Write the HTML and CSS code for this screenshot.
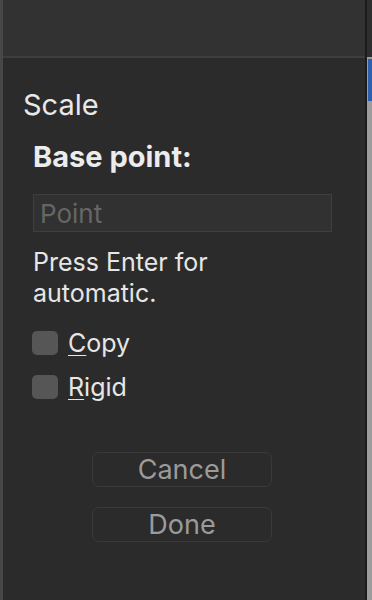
FILE: index.html
```html
<!DOCTYPE html>
<html>
<head>
<meta charset="utf-8">
<link rel="stylesheet" href="styles.css">
</head>
<body>
<div class="window">
  <div class="main">
    <div class="topbar"></div>
    <div class="panel">
      <div class="title">Scale</div>
      <div class="content">
        <div class="label">Base point:</div>
        <div class="input"><span class="placeholder">Point</span></div>
        <div class="hint">Press Enter for<br>automatic.</div>
        <div class="checks">
          <label class="check"><span class="box"></span><span class="ctext"><u>C</u>opy</span></label>
          <label class="check"><span class="box"></span><span class="ctext"><u>R</u>igid</span></label>
        </div>
      </div>
      <div class="buttons">
        <div class="btn">Cancel</div>
        <div class="btn">Done</div>
      </div>
    </div>
  </div>
  <div class="divider"></div>
  <div class="side">
    <div class="side-top"></div>
    <div class="side-body"><div class="side-blue"></div></div>
  </div>
</div>
</body>
</html>
```
FILE: styles.css
```css
html, body {
  margin: 0;
  padding: 0;
  background: #2b2b2b;
}
body {
  width: 372px;
  height: 600px;
  overflow: hidden;
  font-family: Inter, "Liberation Sans", sans-serif;
  color: #e6e6e6;
}
.window {
  display: flex;
  height: 600px;
}
.main {
  flex: 1;
  display: flex;
  flex-direction: column;
  border-left: 3px solid #474747;
}
.topbar {
  height: 56px;
  background: #323232;
  border-bottom: 2px solid #3e3e3e;
}
.panel {
  flex: 1;
  background: #2b2b2b;
  display: flex;
  flex-direction: column;
}
.title {
  margin: 30px 0 0 20px;
  font-size: 29px;
  line-height: 34px;
  color: #e8e8e8;
}
.content {
  padding-left: 30px;
  padding-right: 33px;
}
.label {
  margin-top: 18px;
  font-size: 29px;
  font-weight: 700;
  line-height: 34px;
  color: #ececec;
}
.input {
  margin-top: 20px;
  height: 36px;
  border: 1px solid #3f3f3f;
  background: #313131;
  display: flex;
  align-items: center;
  padding-left: 6px;
}
.placeholder {
  font-size: 26px;
  color: #666;
}
.hint {
  margin-top: 15px;
  font-size: 25px;
  line-height: 31px;
  color: #e6e6e6;
}
.checks {
  margin-top: 22px;
  display: flex;
  flex-direction: column;
  gap: 20px;
}
.check {
  display: flex;
  align-items: center;
  gap: 10px;
}
.box {
  width: 26px;
  height: 24px;
  border-radius: 5px;
  background: #565656;
  margin-left: -1px;
}
.ctext {
  font-size: 25px;
  line-height: 24px;
  color: #e6e6e6;
}
.ctext u {
  text-decoration-thickness: 1px;
  text-underline-offset: 3px;
}
.buttons {
  margin-top: 53px;
  display: flex;
  flex-direction: column;
  gap: 20px;
  padding-left: 89px;
}
.btn {
  width: 178px;
  height: 33px;
  border: 1px solid #3a3a3a;
  border-radius: 7px;
  display: flex;
  align-items: center;
  justify-content: center;
  font-size: 27px;
  color: #9b9b9b;
}
.divider {
  width: 2px;
  background: #1c1c1c;
}
.side {
  width: 5px;
  display: flex;
  flex-direction: column;
}
.side-top {
  height: 57px;
  background: #2e2e2e;
}
.side-body {
  flex: 1;
  background: #9c9c9c;
  padding-top: 2px;
}
.side-blue {
  height: 42px;
  margin-left: 1px;
  background: #2d5fae;
}
```
